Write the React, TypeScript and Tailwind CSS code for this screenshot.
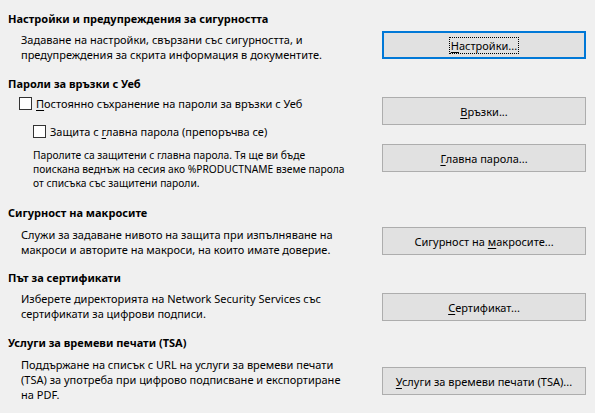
import React from 'react';

const font = { fontFamily: '"Noto Sans", "Open Sans", sans-serif' };

function Key({ children }: { children: React.ReactNode }) {
  return <span className="underline underline-offset-2">{children}</span>;
}

function Button({
  children,
  focused,
  className = '',
}: {
  children: React.ReactNode;
  focused?: boolean;
  className?: string;
}) {
  return (
    <button
      className={`flex h-[28px] w-[204px] shrink-0 items-center justify-center bg-[#e1e1e1] text-[11px] text-black ${
        focused ? 'border-2 border-[#0078d7]' : 'border border-[#adadad]'
      } ${className}`}
    >
      {focused ? (
        <span className="border border-dotted border-black px-[1px] leading-[15px]">{children}</span>
      ) : (
        <span className="leading-[15px]">{children}</span>
      )}
    </button>
  );
}

function Heading({ children, className = '' }: { children: React.ReactNode; className?: string }) {
  return <div className={`h-[15px] text-[11px] font-bold leading-[15px] ${className}`}>{children}</div>;
}

function Checkbox({ label, className = '' }: { label: React.ReactNode; className?: string }) {
  return (
    <div className={`flex h-[15px] items-center gap-[4px] ${className}`}>
      <span className="h-[13px] w-[13px] shrink-0 border border-[#333333] bg-white" />
      <span className="whitespace-nowrap leading-[15px]">{label}</span>
    </div>
  );
}

export default function App() {
  return (
    <div
      style={font}
      className="h-[413px] w-[595px] overflow-hidden bg-[#f0f0f0] pl-[8px] pr-[9px] text-[11px] text-black"
    >
      <Heading className="mt-[11px]">Настройки и предупреждения за сигурността</Heading>
      <div className="mt-[5px] flex">
        <div className="flex-1 whitespace-nowrap pl-[13px] pt-[1px] leading-[15px]">
          Задаване на настройки, свързани със сигурността, и
          <br />
          предупреждения за скрита информация в документите.
        </div>
        <Button focused>
          <Key>Н</Key>астройки...
        </Button>
      </div>

      <Heading className="mt-[14px]">Пароли за връзки с Уеб</Heading>
      <div className="flex">
        <div className="flex-1">
          <Checkbox
            className="mt-[5px] pl-[11px]"
            label={
              <>
                <Key>П</Key>остоянно съхранение на пароли за връзки с Уеб
              </>
            }
          />
          <Checkbox
            className="mt-[13px] pl-[25px]"
            label={
              <>
                Защита с <Key>г</Key>лавна парола (препоръчва се)
              </>
            }
          />
          <div className="mt-[9px] whitespace-nowrap pl-[25px] text-[10.25px] leading-[14px]">
            Паролите са защитени с главна парола. Тя ще ви бъде
            <br />
            поискана веднъж на сесия ако %PRODUCTNAME вземе парола
            <br />
            от списъка със защитени пароли.
          </div>
        </div>
        <div className="flex flex-col">
          <Button className="mt-[6px]">
            <Key>В</Key>ръзки...
          </Button>
          <Button className="mt-[19px]">
            <Key>Г</Key>лавна парола...
          </Button>
        </div>
      </div>

      <Heading className="mt-[15px]">Сигурност на макросите</Heading>
      <div className="flex">
        <div className="flex-1 whitespace-nowrap pl-[13px] pt-[7px] leading-[15px]">
          Служи за задаване нивото на защита при изпълняване на
          <br />
          макроси и авторите на макроси, на които имате доверие.
        </div>
        <Button className="mt-[7px]">
          Сигурност на <Key>м</Key>акросите...
        </Button>
      </div>

      <Heading className="mt-[13px]">Път за сертификати</Heading>
      <div className="flex">
        <div className="flex-1 whitespace-nowrap pl-[13px] pt-[6px] leading-[15px]">
          Изберете директорията на Network Security Services със
          <br />
          сертификати за цифрови подписи.
        </div>
        <Button className="mt-[8px]">
          <Key>С</Key>ертификат...
        </Button>
      </div>

      <Heading className="mt-[14px]">Услуги за времеви печати (TSA)</Heading>
      <div className="flex">
        <div className="flex-1 whitespace-nowrap pl-[13px] pt-[7px] leading-[15px]">
          Поддържане на списък с URL на услуги за времеви печати
          <br />
          (TSA) за употреба при цифрово подписване и експортиране
          <br />
          на PDF.
        </div>
        <Button className="mt-[17px]">
          <Key>У</Key>слуги за времеви печати (TSA)...
        </Button>
      </div>
    </div>
  );
}
